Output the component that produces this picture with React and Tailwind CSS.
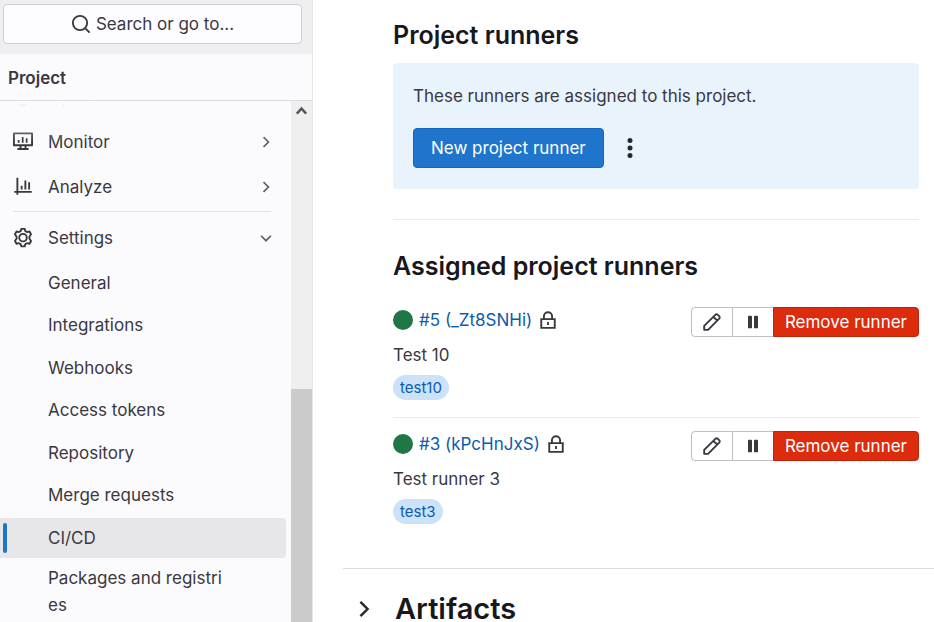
import React from "react";

const stroke = {
  viewBox: "0 0 16 16",
  fill: "none",
  stroke: "currentColor",
  strokeWidth: 1.5,
  "aria-hidden": true,
};

function SearchIcon() {
  return (
    <svg {...stroke} className="size-5 shrink-0">
      <circle cx="7.2" cy="7.2" r="5.7" />
      <path d="M11.3 11.3l3.6 3.6" />
    </svg>
  );
}

function MonitorIcon() {
  return (
    <svg {...stroke} className="size-5 shrink-0">
      <path d="M.75 1.05h14.5v9.5H.75zM6 10.8v2.5M10 10.8v2.5M3.5 13.55h9" strokeLinejoin="round" />
      <path d="M4.5 6.3v2.2M7.75 3.9v4.6M10.9 4.9v3.6" strokeWidth="1.4" />
    </svg>
  );
}

function AnalyzeIcon() {
  return (
    <svg {...stroke} className="size-5 shrink-0">
      <path d="M3.5.6v13.6M1 11.9h14" />
      <path d="M6.9 7v3M9.9 2.8V10M12.9 4.2V10" />
    </svg>
  );
}

function SettingsIcon() {
  return (
    <svg {...stroke} className="size-5 shrink-0">
      <path
        d="M6.7.4h2.6l.6 1.8 1.3.75 1.95-.45 1.3 2.25-1.35 1.9v1.5l1.35 1.9-1.3 2.25-1.95-.45-1.3.75-.6 1.8H6.7l-.6-1.8-1.3-.75-1.95.45-1.3-2.25 1.35-1.9v-1.5l-1.35-1.9 1.3-2.25 1.95.45 1.3-.75z"
        strokeLinejoin="round"
        transform="translate(0 .3)"
      />
      <circle cx="8" cy="7.7" r="3" />
    </svg>
  );
}

function OperateIcon() {
  return (
    <svg {...stroke} className="size-5 shrink-0">
      <path d="M8 1l6 3.5v7L8 15l-6-3.5v-7z" />
    </svg>
  );
}

function ChevronRight({ className }) {
  return (
    <svg {...stroke} className={className}>
      <path d="M5.8 3.6L10.2 8l-4.4 4.4" />
    </svg>
  );
}

function ChevronDown({ className }) {
  return (
    <svg {...stroke} className={className}>
      <path d="M3.6 6L8 10.4 12.4 6" />
    </svg>
  );
}

function LockIcon() {
  return (
    <svg {...stroke} role="img" aria-label="Locked" aria-hidden={false} className="size-5 shrink-0 text-[#3a383f]">
      <path d="M2.6 7.25h10.8v7H2.6zM4.75 7V5a3.25 3.25 0 0 1 6.5 0v2" />
      <path d="M8 9.6v2.4" />
    </svg>
  );
}

function PencilIcon() {
  return (
    <svg {...stroke} className="size-5">
      <path d="M1.75 14.25v-3.1l8.9-8.9a1.4 1.4 0 0 1 2 0l1.1 1.1a1.4 1.4 0 0 1 0 2l-8.9 8.9zM9.2 3.9l2.9 2.9" strokeLinejoin="round" />
    </svg>
  );
}

function PauseIcon() {
  return (
    <svg viewBox="0 0 16 16" fill="currentColor" aria-hidden className="size-5">
      <rect x="4" y="3" width="3.2" height="10" rx=".7" />
      <rect x="8.8" y="3" width="3.2" height="10" rx=".7" />
    </svg>
  );
}

function KebabIcon() {
  return (
    <svg viewBox="0 0 16 16" fill="currentColor" aria-hidden className="size-5">
      <circle cx="8" cy="2" r="2" />
      <circle cx="8" cy="8" r="2" />
      <circle cx="8" cy="14" r="2" />
    </svg>
  );
}

function NavSection({ icon, label, open }) {
  const Chevron = open ? ChevronDown : ChevronRight;
  return (
    <button type="button" aria-expanded={open} className="flex h-10 w-full items-center gap-[15px] pr-[11px] pl-[13px] text-left">
      {icon}
      <span className="flex-1">{label}</span>
      <Chevron className="size-[18px] text-[#626168]" />
    </button>
  );
}

const settingsLinks = [
  "General",
  "Integrations",
  "Webhooks",
  "Access tokens",
  "Repository",
  "Merge requests",
  "CI/CD",
];

function Sidebar() {
  return (
    <aside className="flex h-full w-[313px] shrink-0 flex-col border-r border-[#e7e7ea] bg-[#fbfafd]">
      <div className="bg-[#efeff1] pt-1 pr-[10px] pb-[10px] pl-[3px]">
        <button type="button" className="flex h-10 w-full items-center justify-center gap-[5px] rounded border border-[#d0d0d4] bg-[#fdfcff]">
          <SearchIcon />
          <span>Search or go to...</span>
        </button>
      </div>
      <h2 className="flex h-[47px] shrink-0 items-center border-b border-[#dcdcde] px-2 pt-0.5 font-semibold">
        Project
      </h2>
      <div className="relative flex min-h-0 flex-1">
        <nav aria-label="Project" className="min-w-0 flex-1 overflow-hidden pr-[5px]">
          <div className="-mt-6 flex flex-col gap-[5px]">
            <NavSection icon={<OperateIcon />} label="Operate" open={false} />
            <NavSection icon={<MonitorIcon />} label="Monitor" open={false} />
            <NavSection icon={<AnalyzeIcon />} label="Analyze" open={false} />
          </div>
          <hr className="mt-1 mr-[15px] mb-[6px] ml-[13px] border-[#e4e4e7]" />
          <NavSection icon={<SettingsIcon />} label="Settings" open />
          <ul className="mt-[5px] flex min-h-[295px] flex-col justify-between">
            {settingsLinks.map((label) =>
              label === "CI/CD" ? (
                <li key={label}>
                  <a href="#cicd" aria-current="page" className="flex h-10 items-center rounded-r bg-[#e7e7ea] pl-[3px]">
                    <span className="h-[30px] w-1 rounded-full bg-[#1f75cb]" />
                    <span className="pl-[41px]">{label}</span>
                  </a>
                </li>
              ) : (
                <li key={label}>
                  <a href="#settings" className="flex h-10 items-center pl-12">{label}</a>
                </li>
              ),
            )}
          </ul>
          <a href="#packages" className="mt-[7px] block pr-14 pl-12 leading-[27px] break-all">
            Packages and registries
          </a>
        </nav>
        <div className="pointer-events-none absolute top-0 right-[21px] left-0 h-10 bg-linear-to-b from-[#fbfafd] from-5% to-[#fbfafd]/0" />
        <div aria-hidden className="flex w-[21px] flex-col bg-[#efefef]">
          <svg viewBox="0 0 21 21" fill="none" stroke="#56555b" strokeWidth="2.4" className="size-[21px]">
            <path d="M5.8 12.6l4.7-5 4.7 5" />
          </svg>
          <div className="mt-[267px] flex-1 bg-[#cbcbcb]" />
        </div>
      </div>
    </aside>
  );
}

function Runner({ name, description, tag }) {
  return (
    <li className="flex items-start justify-between pt-[13px] pb-[17px]">
      <div>
        <div className="flex h-[26px] items-center gap-[6px]">
          <span role="img" aria-label="Online" className="size-5 rounded-full bg-[#217645]" />
          <a href="#runner" className="text-[#0b5cad]">{name}</a>
          <LockIcon />
        </div>
        <p className="mt-[10px] leading-[25px]">{description}</p>
        <span className="mt-[7px] flex h-[25px] w-fit items-center rounded-full bg-[#cbe2f9] px-[7px] text-[15px] text-[#0b5cad]">
          {tag}
        </span>
      </div>
      <div className="flex h-[30px]">
        <button type="button" aria-label="Edit" className="flex w-[42px] items-center justify-center rounded-l border border-[#bfbfc3]">
          <PencilIcon />
        </button>
        <button type="button" aria-label="Pause" className="flex w-10 items-center justify-center border-y border-[#bfbfc3]">
          <PauseIcon />
        </button>
        <button type="button" className="rounded-r border border-[#c02208] bg-[#dd2b0e] px-[11px] text-white">
          Remove runner
        </button>
      </div>
    </li>
  );
}

export default function App() {
  return (
    <div className="flex h-screen overflow-hidden bg-white font-['Inter','Liberation_Sans',sans-serif] text-[17px] leading-[25px] text-[#3a383f]">
      <Sidebar />
      <main className="min-w-0 flex-1 pl-[30px]">
        <div className="pt-[19px] pr-[15px] pb-[27px] pl-[50px]">
          <h3 className="text-[25px] leading-8 font-semibold text-[#18171d]">Project runners</h3>
          <div className="mt-3 rounded bg-[#e9f3fc] px-5 pt-[21px] pb-[21px]">
            <p>These runners are assigned to this project.</p>
            <div className="mt-[19px] flex items-center gap-4">
              <button type="button" className="h-10 rounded border border-[#1068bf] bg-[#1f75cb] px-[17px] text-white">
                New project runner
              </button>
              <button type="button" aria-label="More actions" className="text-[#28272d]">
                <KebabIcon />
              </button>
            </div>
          </div>
          <hr className="my-[30px] border-[#ececef]" />
          <h3 className="text-[25px] leading-8 font-semibold text-[#18171d]">Assigned project runners</h3>
          <ul className="mt-3 divide-y divide-[#ececef]">
            <Runner name="#5 (_Zt8SNHi)" description="Test 10" tag="test10" />
            <Runner name="#3 (kPcHnJxS)" description="Test runner 3" tag="test3" />
          </ul>
        </div>
        <section className="border-t border-[#dcdcde] pt-5">
          <button type="button" className="flex items-center gap-[18px] pl-2 text-[#28272d]">
            <ChevronRight className="size-[26px]" />
            <span className="text-[29px] leading-10 font-semibold text-[#18171d]">Artifacts</span>
          </button>
        </section>
      </main>
    </div>
  );
}
